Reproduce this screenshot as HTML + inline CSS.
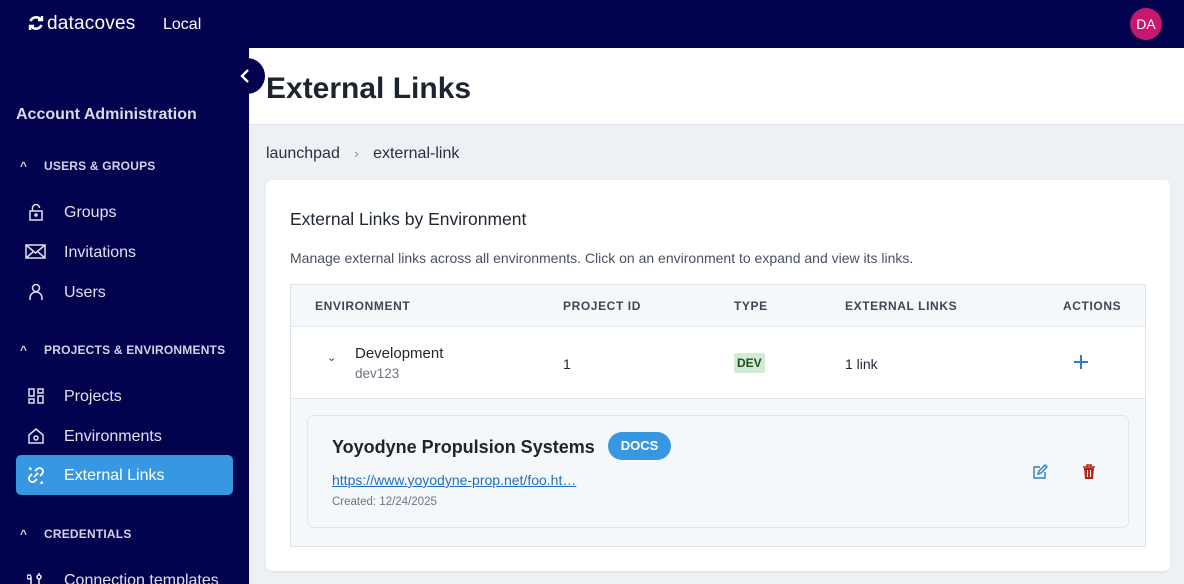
<!DOCTYPE html>
<html><head><style>
*{box-sizing:border-box;margin:0;padding:0}
html,body{width:1184px;height:584px;overflow:hidden}
body{font-family:"Liberation Sans",sans-serif;background:#edf1f6;position:relative}
.top{position:absolute;left:0;top:0;width:1184px;height:48px;background:#02024e}
.logo{position:absolute;left:28px;top:13px;color:#fff;font-size:19px;font-weight:normal;letter-spacing:0.2px}
.local{position:absolute;left:163px;top:16px;color:#fff;font-size:16px}
.av{position:absolute;left:1130px;top:8px;width:32px;height:32px;border-radius:50%;background:#c8176e;color:#fff;font-size:14px;text-align:center;line-height:32px}
.side{position:absolute;left:0;top:48px;width:249px;height:536px;background:#02024e;color:#d8dcea}
.sh{position:absolute;left:16px;top:58px;font-size:16px;font-weight:bold;color:#d8dcea}
.sec{position:absolute;left:20px;font-size:12px;font-weight:bold;letter-spacing:.2px;color:#d0d4e4}
.sec span{display:inline-block;width:24px}
.it{position:absolute;left:16px;width:217px;height:40px;font-size:16px;line-height:41px;padding-left:48px;color:#dfe2ee}
.it svg{position:absolute;left:11px;top:11px}
.it.act{background:#3797e0;color:#fff;border-radius:5px}
.hdr{position:absolute;left:249px;top:48px;width:935px;height:77px;background:#fff;border-bottom:1px solid #dde3ea}
.hdr h1{position:absolute;left:17px;top:24px;font-size:30px;font-weight:bold;color:#1c2430}
.tog{position:absolute;left:225px;top:58px;width:40px;height:36px;border-radius:18px;background:#02024e}
.bc{position:absolute;left:266px;top:145px;font-size:16px;color:#2a303a}
.card{position:absolute;left:266px;top:180px;width:904px;height:391px;background:#fff;border-radius:6px;box-shadow:0 1px 2px rgba(0,0,0,.08)}
.ct{position:absolute;left:24px;top:29px;font-size:17.5px;color:#1e2632}
.cd{position:absolute;left:24px;top:70px;font-size:14px;color:#4a5260}
.tbl{position:absolute;left:24px;top:104px;width:856px;height:263px;border:1px solid #dde3ea;background:#f5f8fb}
.th{position:absolute;top:14px;font-size:12px;font-weight:bold;letter-spacing:.6px;color:#3f4756}
.row{position:absolute;left:0;top:41px;width:854px;height:73px;background:#fff;border-top:1px solid #e3e8ee;border-bottom:1px solid #e3e8ee}
.sub{position:absolute;left:16px;top:130px;width:822px;height:113px;border:1px solid #e0e6ed;border-radius:7px;background:#f5f8fb}
</style></head><body>
<div class="top">
<div class="logo"><svg width="16" height="16" viewBox="0 0 16 16" style="vertical-align:-2px;margin-right:3px"><path d="M13 5A6 6 0 0 0 2.5 6M3 11a6 6 0 0 0 10.5-1" fill="none" stroke="#fff" stroke-width="2.6"/><path d="M10 5h4V1M6 11H2v4" fill="none" stroke="#fff" stroke-width="2.4"/></svg>datacoves</div>
<div class="local">Local</div>
<div class="av">DA</div>
</div>
<div class="side">
<div class="sh">Account Administration</div>
<div class="sec" style="top:111px"><span>^</span>USERS &amp; GROUPS</div>
<div class="it" style="top:144px"><svg width="18" height="18" viewBox="0 0 18 18" fill="none" stroke="#dfe2ee" stroke-width="1.5"><rect x="3" y="8" width="12" height="9"/><path d="M5.5 8V5a3.5 3.5 0 0 1 7 0"/><circle cx="9" cy="12" r="1" fill="#dfe2ee"/></svg>Groups</div>
<div class="it" style="top:184px"><svg width="22" height="18" viewBox="0 0 22 18" fill="none" stroke="#dfe2ee" stroke-width="1.5" style="left:9px"><rect x="1" y="2" width="19" height="13"/><path d="M1 2l9.5 8L20 2M1 15l7-6M20 15l-7-6"/></svg>Invitations</div>
<div class="it" style="top:224px"><svg width="18" height="18" viewBox="0 0 18 18" fill="none" stroke="#dfe2ee" stroke-width="1.5"><circle cx="9" cy="5" r="3.5"/><path d="M3 17v-2a6 6 0 0 1 12 0v2"/></svg>Users</div>
<div class="sec" style="top:295px"><span>^</span>PROJECTS &amp; ENVIRONMENTS</div>
<div class="it" style="top:328px"><svg width="18" height="18" viewBox="0 0 18 18" fill="none" stroke="#dfe2ee" stroke-width="1.5"><rect x="2" y="2" width="5" height="7"/><rect x="11" y="2" width="5" height="4"/><rect x="2" y="12" width="5" height="4"/><rect x="11" y="9" width="5" height="7"/></svg>Projects</div>
<div class="it" style="top:368px"><svg width="18" height="18" viewBox="0 0 18 18" fill="none" stroke="#dfe2ee" stroke-width="1.5"><path d="M2 8l7-6 7 6v8H2z"/><circle cx="9" cy="11" r="2"/></svg>Environments</div>
<div class="it act" style="top:407px"><svg width="18" height="18" viewBox="0 0 18 18" fill="none" stroke="#fff" stroke-width="1.8"><path d="M8 5l2-2a3.5 3.5 0 0 1 5 5l-2 2M10 13l-2 2a3.5 3.5 0 0 1-5-5l2-2M7 11l4-4"/><path d="M2 3h3M3 1v3M13 17h3M15 15v3" stroke-width="1.3"/></svg>External Links</div>
<div class="sec" style="top:479px"><span>^</span>CREDENTIALS</div>
<div class="it" style="top:512px"><svg width="18" height="18" viewBox="0 0 18 18" fill="none" stroke="#dfe2ee" stroke-width="1.6"><path d="M4 18V6M4 6a2 2 0 1 1 0-.1M12 18V8M12 2v3"/><circle cx="12" cy="6" r="2"/></svg>Connection templates</div>
</div>
<div class="hdr"><h1>External Links</h1></div>
<div class="tog"><svg width="40" height="36" viewBox="0 0 40 36"><path d="M23 12l-6 6 6 6" fill="none" stroke="#fff" stroke-width="2.4"/></svg></div>
<div class="bc">launchpad <span style="color:#888;margin:0 10px;font-size:13px">›</span> external-link</div>
<div class="card">
<div class="ct">External Links by Environment</div>
<div class="cd">Manage external links across all environments. Click on an environment to expand and view its links.</div>
<div class="tbl">
<div class="th" style="left:24px">ENVIRONMENT</div>
<div class="th" style="left:272px">PROJECT ID</div>
<div class="th" style="left:443px">TYPE</div>
<div class="th" style="left:554px">EXTERNAL LINKS</div>
<div class="th" style="left:772px">ACTIONS</div>
<div class="row">
<div style="position:absolute;left:36px;top:24px;font-size:11px;color:#333">⌄</div>
<div style="position:absolute;left:64px;top:18px;font-size:15px;color:#1e2632">Development</div>
<div style="position:absolute;left:64px;top:39px;font-size:13.5px;color:#6b7585">dev123</div>
<div style="position:absolute;left:272px;top:29px;font-size:14px;color:#1e2632">1</div>
<div style="position:absolute;left:443px;top:26px;background:#d3ead3;color:#264a26;font-size:12px;font-weight:bold;padding:3px 3px;border-radius:2px">DEV</div>
<div style="position:absolute;left:554px;top:29px;font-size:14px;color:#1e2632">1 link</div>
<svg style="position:absolute;left:782px;top:27px" width="16" height="16"><path d="M8 1v14M1 8h14" stroke="#2a7fc8" stroke-width="2"/></svg>
</div>
<div class="sub">
<div style="position:absolute;left:24px;top:21px;font-size:18px;font-weight:bold;color:#1c2430">Yoyodyne Propulsion Systems</div>
<div style="position:absolute;left:300px;top:16px;height:28px;width:63px;border-radius:14px;background:#3797e0;color:#fff;font-size:13px;font-weight:bold;text-align:center;line-height:28px">DOCS</div>
<div style="position:absolute;left:24px;top:56px;font-size:14px;color:#1f6fbf;text-decoration:underline">https://www.yoyodyne-prop.net/foo.ht…</div>
<div style="position:absolute;left:24px;top:80px;font-size:11.5px;color:#6b7585">Created: 12/24/2025</div>
<svg style="position:absolute;left:724px;top:48px" width="16" height="16" viewBox="0 0 16 16" fill="none" stroke="#2a7fc8" stroke-width="1.4"><path d="M8 3H2v11h11V8"/><path d="M6 10l1-3 6-6 2 2-6 6z"/></svg>
<svg style="position:absolute;left:774px;top:48px" width="14" height="16" viewBox="0 0 14 16"><path d="M1 3h12M5 3V1h4v2" stroke="#b42318" stroke-width="1.5" fill="none"/><path d="M2 4h10l-1 11H3z" fill="#b42318"/><path d="M5.5 6v7M8.5 6v7" stroke="#fff" stroke-width="1.1"/></svg>
</div>
</div>
</div>
</body></html>
